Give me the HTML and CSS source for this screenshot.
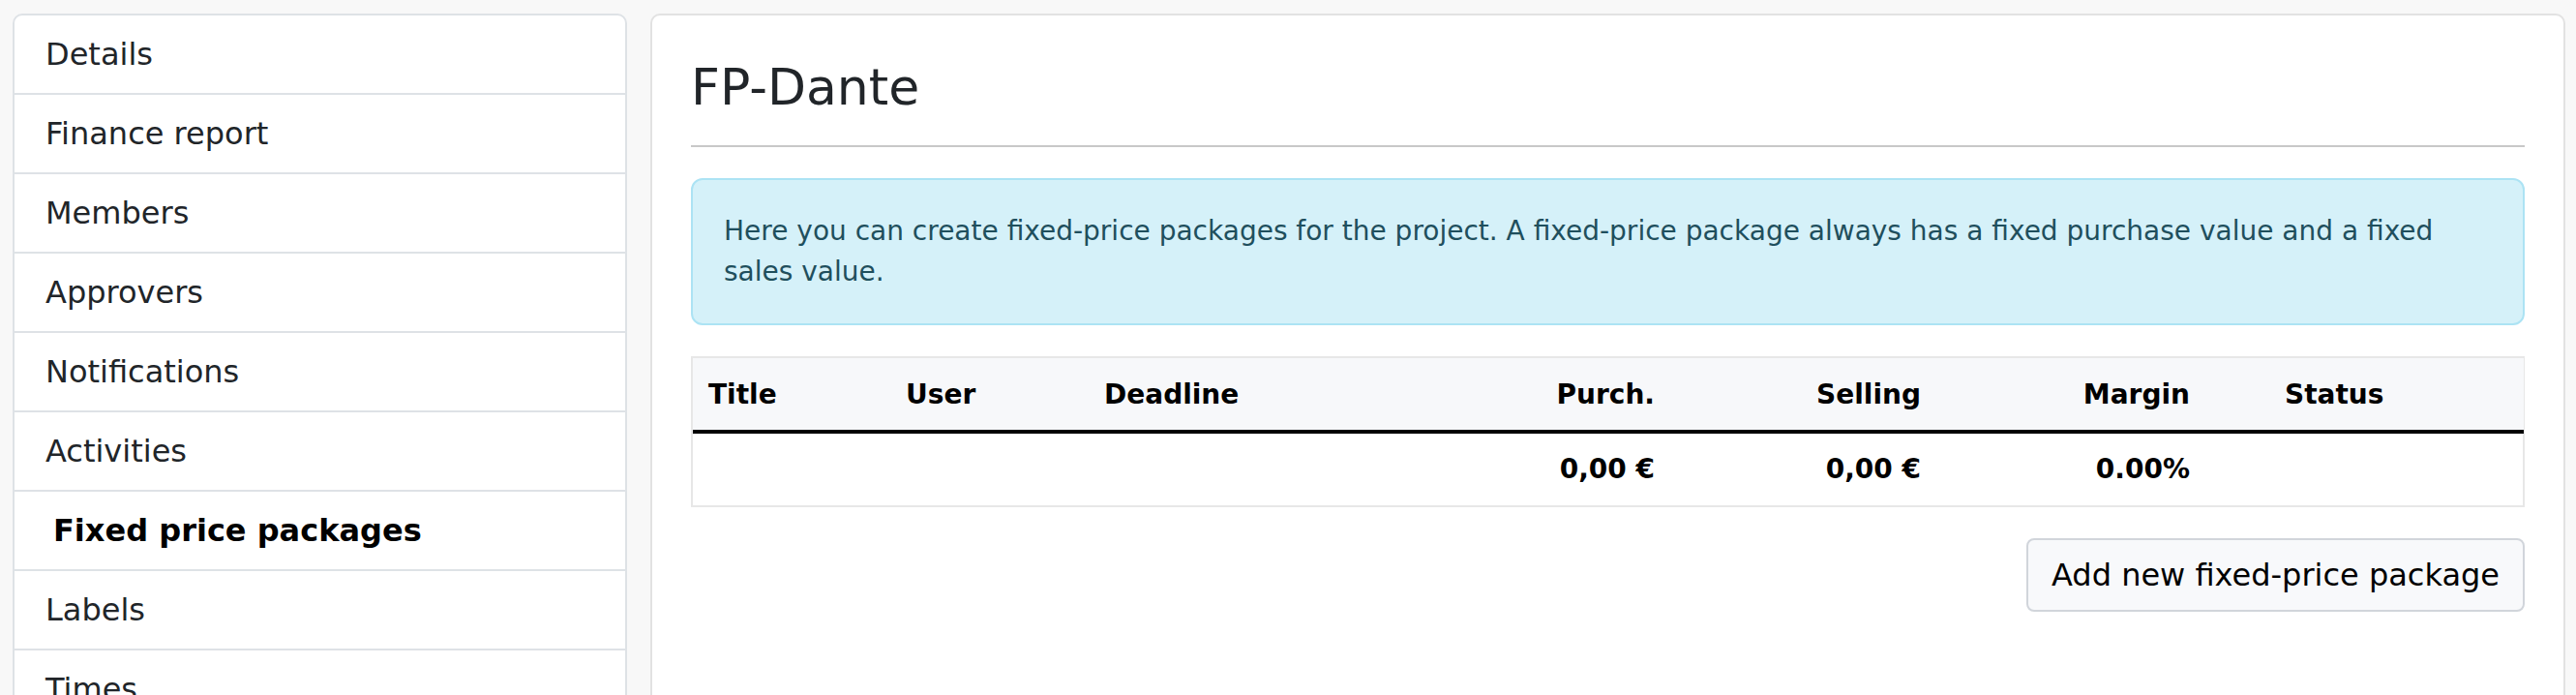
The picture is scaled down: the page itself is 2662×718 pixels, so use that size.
FILE: index.html
```html
<!DOCTYPE html>
<html lang="en">
<head>
<meta charset="utf-8">
<title>FP-Dante – Fixed price packages</title>
<link rel="stylesheet" href="styles.css">
</head>
<body>
<div class="page">
  <nav class="sidebar">
    <a class="nav-item" href="#">Details</a>
    <a class="nav-item" href="#">Finance report</a>
    <a class="nav-item" href="#">Members</a>
    <a class="nav-item" href="#">Approvers</a>
    <a class="nav-item" href="#">Notifications</a>
    <a class="nav-item" href="#">Activities</a>
    <a class="nav-item active" href="#">Fixed price packages</a>
    <a class="nav-item" href="#">Labels</a>
    <a class="nav-item" href="#">Times</a>
  </nav>
  <main class="content">
    <h1 class="title">FP-Dante</h1>
    <hr class="divider">
    <div class="alert">Here you can create fixed-price packages for the project. A fixed-price package always has a fixed purchase value and a fixed sales value.</div>
    <div class="table-wrap">
      <table class="packages">
        <colgroup>
          <col class="c-title">
          <col class="c-user">
          <col class="c-deadline">
          <col class="c-purch">
          <col class="c-selling">
          <col class="c-margin">
          <col class="c-status">
        </colgroup>
        <thead>
          <tr>
            <th>Title</th>
            <th>User</th>
            <th>Deadline</th>
            <th class="num">Purch.</th>
            <th class="num">Selling</th>
            <th class="num">Margin</th>
            <th class="status">Status</th>
          </tr>
        </thead>
        <tbody>
          <tr>
            <td></td>
            <td></td>
            <td></td>
            <td class="num">0,00 €</td>
            <td class="num">0,00 €</td>
            <td class="num">0.00%</td>
            <td class="status"></td>
          </tr>
        </tbody>
      </table>
    </div>
    <div class="actions">
      <button class="btn" type="button">Add new fixed-price package</button>
    </div>
  </main>
</div>
</body>
</html>
```

FILE: styles.css
```css
html, body {
  margin: 0;
  padding: 0;
  height: 718px;
  overflow: hidden;
  background: #f8f8f8;
  font-family: "DejaVu Sans", Verdana, sans-serif;
  color: #212529;
}

.page {
  display: flex;
  align-items: flex-start;
  gap: 24px;
  padding: 14px 11px 0 13px;
}

/* Sidebar list group */
.sidebar {
  flex: 0 0 635px;
  box-sizing: border-box;
  display: flex;
  flex-direction: column;
  background: #fff;
  border: 2px solid #dee2e6;
  border-radius: 10px;
  overflow: hidden;
}

.nav-item {
  display: block;
  padding: 16px 32px;
  font-size: 32px;
  line-height: 48px;
  color: #212529;
  text-decoration: none;
  border-bottom: 2px solid #dee2e6;
}

.nav-item:last-child {
  border-bottom: none;
}

.nav-item.active {
  padding-left: 40px;
  font-weight: bold;
  color: #000;
}

/* Main card */
.content {
  flex: 1 1 auto;
  min-width: 0;
  box-sizing: border-box;
  min-height: 800px;
  background: #fff;
  border: 2px solid #e2e2e2;
  border-radius: 10px;
  padding: 40px;
}

.title {
  margin: 0 0 26px;
  font-size: 52px;
  line-height: 68px;
  font-weight: normal;
  color: #212529;
}

.divider {
  margin: 0 0 32px;
  border: 0;
  height: 2px;
  background: #c8c8c8;
}

.alert {
  border: 2px solid #ace3f4;
  background: #d5f1f9;
  color: #1f4f5d;
  border-radius: 12px;
  padding: 32px;
  font-size: 28px;
  line-height: 42px;
}

.table-wrap {
  margin-top: 32px;
  border: 2px solid #e7e7e7;
}

.packages {
  width: 100%;
  table-layout: fixed;
  border-collapse: collapse;
  font-size: 28px;
  line-height: 42px;
  color: #000;
}

.c-title { width: 204px; }
.c-user { width: 205px; }
.c-deadline { width: 325px; }
.c-purch { width: 276px; }
.c-selling { width: 275px; }
.c-margin { width: 278px; }
.c-status { width: 329px; }

.packages th,
.packages td {
  padding: 16px;
  text-align: left;
  font-weight: bold;
  white-space: nowrap;
}

.packages thead tr {
  background: #f7f8fa;
  border-bottom: 4px solid #000;
}

.packages th {
  padding-top: 17px;
  padding-bottom: 15px;
}

.packages .num {
  text-align: right;
}

.packages .status {
  padding-left: 82px;
}

.actions {
  display: flex;
  justify-content: flex-end;
  margin-top: 32px;
}

.btn {
  font-family: "DejaVu Sans", Verdana, sans-serif;
  font-size: 32px;
  line-height: 48px;
  padding: 12px 24px;
  color: #000;
  background: #f8f9fb;
  border: 2px solid #d1d5db;
  border-radius: 8px;
}
```
